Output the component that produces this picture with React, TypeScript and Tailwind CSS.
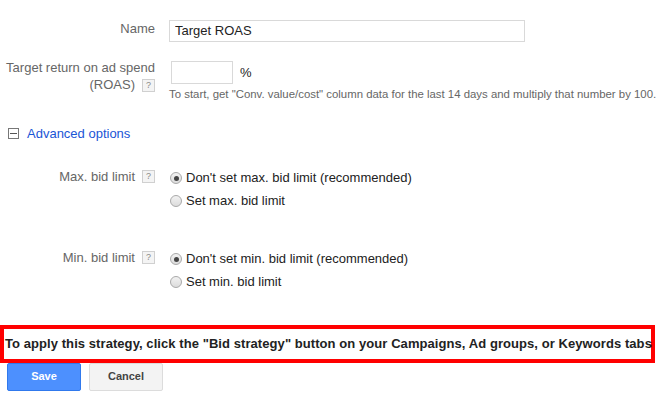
import { ReactNode } from 'react';

const Help = () => (
  <span className="inline-flex items-center justify-center w-[13px] h-[13px] border border-[#d0d0d0] bg-[#f4f4f4] text-[9px] leading-none text-[#888] ml-[7px] align-middle">
    ?
  </span>
);

const Radio = ({ checked, label }: { checked?: boolean; label: string }) => (
  <div className="flex items-center h-[23px]">
    <span className="w-[12px] h-[12px] rounded-full border border-[#a9a9a9] bg-gradient-to-b from-[#f2f2f2] to-[#dcdcdc] flex items-center justify-center">
      {checked && <span className="w-[5px] h-[5px] rounded-full bg-[#444]" />}
    </span>
    <span className="ml-[4px] text-[13px] text-[#222]">{label}</span>
  </div>
);

const Row = ({ label, children, className }: { label: ReactNode; children: ReactNode; className?: string }) => (
  <div className={`flex ${className ?? ''}`}>
    <div className="w-[155px] shrink-0 text-right text-[13px] leading-[17px] text-[#666]">{label}</div>
    <div className="ml-[14px]">{children}</div>
  </div>
);

const App = () => {
  return (
    <div className="w-[671px] h-[419px] bg-white overflow-hidden" style={{ fontFamily: '"Liberation Sans", Arial, sans-serif' }}>
      <Row label={<span className="block pt-[2px]">Name</span>} className="mt-[18px]">
        <input
          readOnly
          value="Target ROAS"
          className="w-[356px] h-[22px] border border-[#d9d9d9] px-[5px] text-[13px] text-[#222] outline-none"
        />
      </Row>

      <Row
        label={
          <div className="-mt-[2px]">
            <div>Target return on ad spend</div>
            <div>
              (ROAS)
              <Help />
            </div>
          </div>
        }
        className="mt-[19px]"
      >
        <div className="flex items-center ml-[2px]">
          <input readOnly className="w-[62px] h-[23px] border border-[#d9d9d9] outline-none" />
          <span className="ml-[7px] text-[13px] text-[#222]">%</span>
        </div>
        <div className="mt-[3px] text-[11.4px] leading-[14px] text-[#666] whitespace-nowrap">
          To start, get "Conv. value/cost" column data for the last 14 days and multiply that number by 100.
        </div>
      </Row>

      <div className="flex items-center mt-[23px] ml-[8px]">
        <span className="w-[11px] h-[11px] border border-[#777] flex items-center justify-center">
          <span className="w-[7px] h-[1px] bg-[#555]" />
        </span>
        <span className="ml-[8px] text-[13px] text-[#1a55d6]">Advanced options</span>
      </div>

      <Row
        label={
          <div className="flex items-center justify-end h-[17px] mt-[1px]">
            <span>Max. bid limit</span>
            <Help />
          </div>
        }
        className="mt-[23px]"
      >
        <div className="ml-[1px]">
          <Radio checked label="Don't set max. bid limit (recommended)" />
          <Radio label="Set max. bid limit" />
        </div>
      </Row>

      <Row
        label={
          <div className="flex items-center justify-end h-[17px] mt-[1px]">
            <span>Min. bid limit</span>
            <Help />
          </div>
        }
        className="mt-[35px]"
      >
        <div className="ml-[1px]">
          <Radio checked label="Don't set min. bid limit (recommended)" />
          <Radio label="Set min. bid limit" />
        </div>
      </Row>

      <div className="mt-[31px] w-[655px] h-[38px] border-[4px] border-[#ff0000] flex items-center pl-[1px]">
        <span className="text-[13px] font-bold tracking-[0.07px] text-[#222] whitespace-nowrap">
          To apply this strategy, click the "Bid strategy" button on your Campaigns, Ad groups, or Keywords tabs
        </span>
      </div>

      <div className="flex ml-[7px] gap-[8px]">
        <button className="w-[74px] h-[28px] rounded-[2px] border border-[#3079ed] bg-[#4d90fe] text-[11px] font-bold text-white">
          Save
        </button>
        <button className="w-[74px] h-[28px] rounded-[2px] border border-[#dcdcdc] bg-[#f3f3f3] text-[11px] font-bold text-[#444]">
          Cancel
        </button>
      </div>
    </div>
  );
};

export default App;
